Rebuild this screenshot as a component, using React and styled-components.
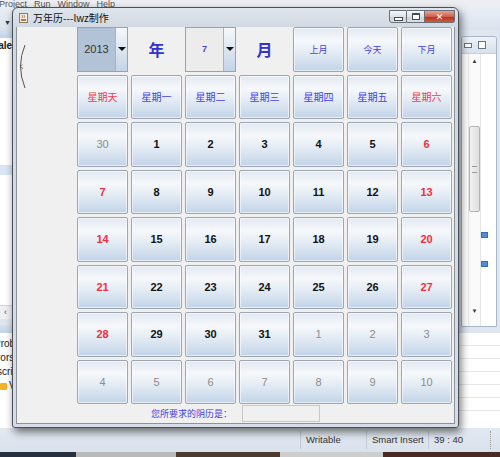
import React from "react";
import styled, { createGlobalStyle } from "styled-components";

const Global = createGlobalStyle`
  html, body { margin: 0; padding: 0; }
  body { width: 500px; height: 457px; overflow: hidden; font-family: "Liberation Sans", Arial, sans-serif; }
`;

const CJK = `"Noto Sans CJK SC", "Noto Sans", sans-serif`;

const Desktop = styled.div`
  position: relative;
  width: 500px;
  height: 457px;
  overflow: hidden;
  background: #eef1f5;
`;

/* ---------- Eclipse background ---------- */
const Eclipse = styled.div`
  display: flex;
  flex-direction: column;
  width: 100%;
  height: 100%;
`;

const MenuBar = styled.div`
  height: 8px;
  display: flex;
  align-items: flex-end;
  gap: 7px;
  overflow: hidden;
  background: #eceef2;
  font: 9px "Liberation Sans", Arial, sans-serif;
  line-height: 9px;
  color: #555;
`;

const MenuItem = styled.span`
  margin-bottom: -1px;
  margin-left: ${(p) => (p.$first ? "-1px" : "0")};
`;

const ToolBar = styled.div`
  height: 22px;
  display: flex;
  align-items: center;
  padding: 6px 0 0 4px;
  box-sizing: border-box;
  background: linear-gradient(#e9eef5, #d9e2ee);
  font-size: 7px;
  color: #333;
`;

const Workbench = styled.div`
  flex: 1;
  display: flex;
  min-height: 0;
`;

const LeftPane = styled.div`
  width: 12px;
  display: flex;
  flex-direction: column;
  background: #dfe6ef;
  overflow: hidden;
`;

const PaneTab = styled.div`
  height: ${(p) => p.$h}px;
  background: linear-gradient(#d5e1ef, #c4d4e7);
  flex-shrink: 0;
`;

const PaneBody = styled.div`
  height: ${(p) => p.$h}px;
  background: #fff;
  flex-shrink: 0;
  display: flex;
  flex-direction: column;
  overflow: hidden;
`;

const ClipText = styled.div`
  white-space: nowrap;
  font: ${(p) => (p.$bold ? 700 : 400)} 10px "Liberation Sans", Arial, sans-serif;
  color: #222;
  margin-left: ${(p) => p.$shift || 0}px;
  margin-top: ${(p) => p.$top || 0}px;
  height: 14px;
  line-height: 14px;
`;

const Highlight = styled.div`
  height: 10px;
  margin-top: ${(p) => p.$top}px;
  background: #d9e5f4;
`;

const HScroll = styled.div`
  height: 13px;
  background: #eceff3;
  border-top: 1px solid #d0d6de;
  font-size: 9px;
  color: #555;
  padding-left: 4px;
  line-height: 12px;
  flex-shrink: 0;
`;

const Gap = styled.div`
  height: ${(p) => p.$h}px;
  flex-shrink: 0;
`;

const WarnIcon = styled.span`
  display: inline-block;
  width: 7px;
  height: 7px;
  background: #f0b32a;
  border-radius: 1px;
  margin-right: 2px;
  vertical-align: -1px;
`;

const Center = styled.div`
  flex: 1;
  background: #f4f6f9;
`;

const RightPane = styled.div`
  width: 41px;
  display: flex;
  flex-direction: column;
  background: #dfe6ef;
`;

const EditorPanel = styled.div`
  margin: 6px 3px 0 2px;
  height: 289px;
  border: 1px solid #a8b6c8;
  border-radius: 3px 3px 0 0;
  display: flex;
  flex-direction: column;
  overflow: hidden;
  flex-shrink: 0;
`;

const EditorHead = styled.div`
  height: 16px;
  display: flex;
  align-items: center;
  gap: 6px;
  padding-left: 2px;
  background: linear-gradient(#eef3f9, #d6e1ee);
  border-bottom: 1px solid #c5d0de;
`;

const TinyBox = styled.span`
  width: 6px;
  height: ${(p) => p.$h}px;
  border: 1px solid #6a7380;
  background: #fff;
  display: block;
`;

const EditorBody = styled.div`
  flex: 1;
  background: #fff;
  display: flex;
  padding-left: 6px;
`;

const VScroll = styled.div`
  width: 11px;
  background: #fafafa;
  border-left: 1px solid #e6e6e6;
  border-right: 1px solid #e6e6e6;
  display: flex;
  flex-direction: column;
  align-items: center;
  font-size: 6px;
  color: #333;
`;

const ScrollArrow = styled.span`
  margin-top: ${(p) => (p.$down ? "auto" : "4px")};
  margin-bottom: ${(p) => (p.$down ? "12px" : "0")};
`;

const Thumb = styled.div`
  width: 9px;
  height: 84px;
  margin-top: 62px;
  border: 1px solid #b4b4b4;
  border-radius: 2px;
  background: linear-gradient(90deg, #f2f2f2, #dedede);
  display: flex;
  align-items: center;
  justify-content: center;
`;

const Grip = styled.div`
  width: 5px;
  height: 5px;
  border-top: 1px solid #999;
  border-bottom: 1px solid #999;
`;

const Markers = styled.div`
  width: 6px;
  display: flex;
  flex-direction: column;
  align-items: center;
`;

const Marker = styled.div`
  width: 5px;
  height: 4px;
  margin-top: ${(p) => p.$top}px;
  background: #4d8fd8;
  border: 1px solid #2f6fb8;
`;

const LowerPanel = styled.div`
  flex: 1;
  margin: 6px 0 0 0;
  background: #fff;
  display: flex;
  flex-direction: column;
`;

const RowLine = styled.div`
  height: 12px;
  border-bottom: 1px solid #e4e7eb;
`;

const StatusBar = styled.div`
  height: 24px;
  display: flex;
  align-items: center;
  padding-left: 300px;
  background: linear-gradient(#e3e9f1, #d9e1ec);
  font: 9.5px "Liberation Sans", Arial, sans-serif;
  color: #333;
`;

const StatusItem = styled.div`
  width: ${(p) => p.$w}px;
  height: 18px;
  line-height: 18px;
  padding-left: 5px;
  box-sizing: border-box;
  border-left: 1px ${(p) => (p.$dotted ? "dotted #999" : "solid #c3ccd8")};
  white-space: nowrap;
  flex-shrink: 0;
`;

const TaskBar = styled.div`
  height: 5px;
  display: flex;
`;

const TaskSeg = styled.div`
  width: ${(p) => p.$w}px;
  flex: ${(p) => (p.$w ? "none" : 1)};
  background: ${(p) => p.$bg};
`;

/* ---------- Java window ---------- */
const Win = styled.div`
  position: absolute;
  left: 12px;
  top: 7px;
  width: 447px;
  height: 421px;
  box-sizing: border-box;
  border: 1px solid #4b5058;
  border-radius: 6px 6px 3px 3px;
  background: linear-gradient(#dfe5ec, #cfd7e1 22px, #d6dde6);
  box-shadow: 2px 4px 9px rgba(0, 0, 0, 0.55);
  display: flex;
  flex-direction: column;
  padding: 0 3px 3px 3px;
`;

const TitleBar = styled.div`
  height: 19px;
  display: flex;
  align-items: flex-start;
  flex-shrink: 0;
`;

const TitleIcon = styled.svg`
  margin: 5px 0 0 3px;
  flex-shrink: 0;
`;

const TitleText = styled.span`
  margin: 3px 0 0 5px;
  font: 10px ${CJK};
  line-height: 14px;
  color: #111;
`;

const Caption = styled.div`
  margin-left: auto;
  margin-right: 0;
  margin-top: 2px;
  display: flex;
`;

const CapBtn = styled.div`
  width: ${(p) => p.$w}px;
  height: 13px;
  box-sizing: border-box;
  border: 1px solid #68707a;
  border-left-width: ${(p) => (p.$first ? 1 : 0)}px;
  border-radius: ${(p) => p.$r};
  background: ${(p) =>
    p.$close
      ? "linear-gradient(#e9a294, #d0604c 50%, #b8301c 51%, #cf5a3e)"
      : "linear-gradient(#f4f6f9, #dfe4ea 50%, #c9d0d9 51%, #dbe1e8)"};
  display: flex;
  align-items: center;
  justify-content: center;
  color: #fff;
  font: 700 9px "DejaVu Sans", sans-serif;
`;

const MinGlyph = styled.span`
  width: 7px;
  height: 2px;
  margin-top: 4px;
  background: #fff;
  border: 1px solid #434a54;
`;

const MaxGlyph = styled.span`
  width: 6px;
  height: 4px;
  border: 1px solid #434a54;
  border-top-width: 2px;
  background: #fff;
`;

const Content = styled.div`
  flex: 1;
  display: flex;
  flex-direction: column;
  background: #f0f0f0;
  border: 1px solid #8b929b;
  border-top: none;
`;

const Body = styled.div`
  display: flex;
`;

const Side = styled.div`
  width: 60px;
  flex-shrink: 0;
`;

const ArcSvg = styled.svg`
  display: block;
  margin-top: 17px;
`;

const Grid = styled.div`
  display: grid;
  grid-template-columns: repeat(7, 51px);
  grid-template-rows: repeat(8, 44.5px);
  gap: 3px;
`;

const Cell = styled.div`
  box-sizing: border-box;
  border: 1px solid #9ea7b1;
  border-radius: 2px;
  background: linear-gradient(to bottom, #e2e9f2 0%, #f6f8fb 30%, #e3ebf4 58%, #c2d4e8 100%);
  box-shadow: inset 0 0 0 1px rgba(255, 255, 255, 0.55);
  display: flex;
  align-items: center;
  justify-content: center;
  font-family: "Liberation Sans", Arial, sans-serif;
  font-size: 11px;
  font-weight: ${(p) => (p.$tone === "muted" ? 400 : 700)};
  color: ${(p) =>
    p.$tone === "red" ? "#f0303c" : p.$tone === "muted" ? "#8c8c8c" : "#121212"};
`;

const HeadCell = styled(Cell)`
  font: 10px ${CJK};
  color: ${(p) => (p.$red ? "#f03c46" : "#3f3ff0")};
`;

const NavCell = styled(Cell)`
  font: 9px ${CJK};
  color: #4444e0;
`;

const Label = styled.div`
  display: flex;
  align-items: center;
  justify-content: center;
  font: 700 16px ${CJK};
  color: #3232d2;
`;

const Combo = styled.div`
  display: flex;
  box-sizing: border-box;
  border: 1px solid #98a3af;
`;

const ComboText = styled.div`
  flex: 1;
  display: flex;
  align-items: center;
  justify-content: center;
  background: ${(p) => (p.$active ? "#b3c3d7" : "#ececec")};
  color: ${(p) => (p.$active ? "#333" : "#4646b4")};
  font-size: ${(p) => (p.$active ? 11 : 9)}px;
  font-weight: ${(p) => (p.$active ? 400 : 700)};
`;

const ComboArrow = styled.div`
  width: 11px;
  border-left: 1px solid #a9b4c0;
  background: linear-gradient(#f6f8fb, #dde6f0 50%, #c3d4e7);
  display: flex;
  align-items: center;
  justify-content: center;
`;

const Tri = styled.span`
  width: 0;
  height: 0;
  border-left: 4px solid transparent;
  border-right: 4px solid transparent;
  border-top: 4px solid #111;
`;

const Footer = styled.div`
  flex: 1;
  display: flex;
  align-items: center;
  justify-content: center;
  gap: 10px;
`;

const FootLabel = styled.span`
  font: 9px ${CJK};
  color: #3f3fe0;
`;

const Field = styled.div`
  width: 76px;
  height: 15px;
  border: 1px solid #c8c8c8;
  background: #f0f0f0;
`;

const weekdays = ["星期天", "星期一", "星期二", "星期三", "星期四", "星期五", "星期六"];

const dates = [
  [30, "m"], [1], [2], [3], [4], [5], [6, "r"],
  [7, "r"], [8], [9], [10], [11], [12], [13, "r"],
  [14, "r"], [15], [16], [17], [18], [19], [20, "r"],
  [21, "r"], [22], [23], [24], [25], [26], [27, "r"],
  [28, "r"], [29], [30], [31], [1, "m"], [2, "m"], [3, "m"],
  [4, "m"], [5, "m"], [6, "m"], [7, "m"], [8, "m"], [9, "m"], [10, "m"],
];

export default function App() {
  return (
    <Desktop>
      <Global />
      <Eclipse>
        <MenuBar>
          <MenuItem $first>Project</MenuItem>
          <MenuItem>Run</MenuItem>
          <MenuItem>Window</MenuItem>
          <MenuItem>Help</MenuItem>
        </MenuBar>
        <ToolBar>▼</ToolBar>
        <Workbench>
          <LeftPane>
            <PaneTab $h={8} />
            <PaneBody $h={267}>
              <ClipText $bold $shift={-9} $top={1}>Calen</ClipText>
              <Highlight $top={112} />
            </PaneBody>
            <HScroll>‹</HScroll>
            <Gap $h={6} />
            <PaneTab $h={8} />
            <PaneBody $h={96}>
              <ClipText $shift={-6} $top={4}>Probl</ClipText>
              <ClipText $shift={-13}>Errors</ClipText>
              <ClipText $shift={-24}>Javascript</ClipText>
              <ClipText><WarnIcon />V</ClipText>
            </PaneBody>
          </LeftPane>
          <Center />
          <RightPane>
            <EditorPanel>
              <EditorHead>
                <TinyBox $h={3} />
                <TinyBox $h={6} />
              </EditorHead>
              <EditorBody>
                <VScroll>
                  <ScrollArrow>▲</ScrollArrow>
                  <Thumb><Grip /></Thumb>
                  <ScrollArrow $down>▼</ScrollArrow>
                </VScroll>
                <Markers>
                  <Marker $top={178} />
                  <Marker $top={23} />
                </Markers>
              </EditorBody>
            </EditorPanel>
            <LowerPanel>
              <RowLine />
              <RowLine />
              <RowLine />
              <RowLine />
              <RowLine />
              <RowLine />
            </LowerPanel>
          </RightPane>
        </Workbench>
        <StatusBar>
          <StatusItem $w={66}>Writable</StatusItem>
          <StatusItem $w={62}>Smart Insert</StatusItem>
          <StatusItem $w={62}>39 : 40</StatusItem>
          <StatusItem $w={10} $dotted />
        </StatusBar>
        <TaskBar>
          <TaskSeg $w={76} $bg="#26303f" />
          <TaskSeg $w={100} $bg="#b9b9b9" />
          <TaskSeg $w={104} $bg="#4b3b30" />
          <TaskSeg $w={103} $bg="#cdcdcd" />
          <TaskSeg $bg="#4a2a24" />
        </TaskBar>
      </Eclipse>

      <Win>
        <TitleBar>
          <TitleIcon width="9" height="10" viewBox="0 0 9 10">
            <rect x="0.5" y="0.5" width="8" height="9" fill="#f4efe2" stroke="#8a7a60" />
            <path d="M2 6 h5 v2 h-5z" fill="#c0763a" />
            <path d="M3 2 q1 1 0 3 M5 2 q1 1 0 3" stroke="#a05a2a" fill="none" strokeWidth="0.8" />
          </TitleIcon>
          <TitleText>万年历---lwz制作</TitleText>
          <Caption>
            <CapBtn $w={18} $first $r="0 0 0 3px"><MinGlyph /></CapBtn>
            <CapBtn $w={18} $r="0"><MaxGlyph /></CapBtn>
            <CapBtn $w={30} $close $r="0 0 3px 0">✕</CapBtn>
          </Caption>
        </TitleBar>
        <Content>
          <Body>
            <Side>
              <ArcSvg width="12" height="46" viewBox="0 0 12 46">
                <path d="M8 1 Q-1 22 8 44" stroke="#444" strokeWidth="0.9" fill="none" />
                <text x="3" y="24" fontSize="6" fill="#444" fontFamily="DejaVu Sans">ς</text>
              </ArcSvg>
            </Side>
            <Grid>
              <Combo>
                <ComboText $active>2013</ComboText>
                <ComboArrow><Tri /></ComboArrow>
              </Combo>
              <Label>年</Label>
              <Combo>
                <ComboText>7</ComboText>
                <ComboArrow><Tri /></ComboArrow>
              </Combo>
              <Label>月</Label>
              <NavCell>上月</NavCell>
              <NavCell>今天</NavCell>
              <NavCell>下月</NavCell>
              {weekdays.map((w, i) => (
                <HeadCell key={w} $red={i === 0 || i === 6}>{w}</HeadCell>
              ))}
              {dates.map(([d, t], i) => (
                <Cell key={i} $tone={t === "m" ? "muted" : t === "r" ? "red" : "normal"}>{d}</Cell>
              ))}
            </Grid>
          </Body>
          <Footer>
            <FootLabel>您所要求的阴历是：</FootLabel>
            <Field />
          </Footer>
        </Content>
      </Win>
    </Desktop>
  );
}
